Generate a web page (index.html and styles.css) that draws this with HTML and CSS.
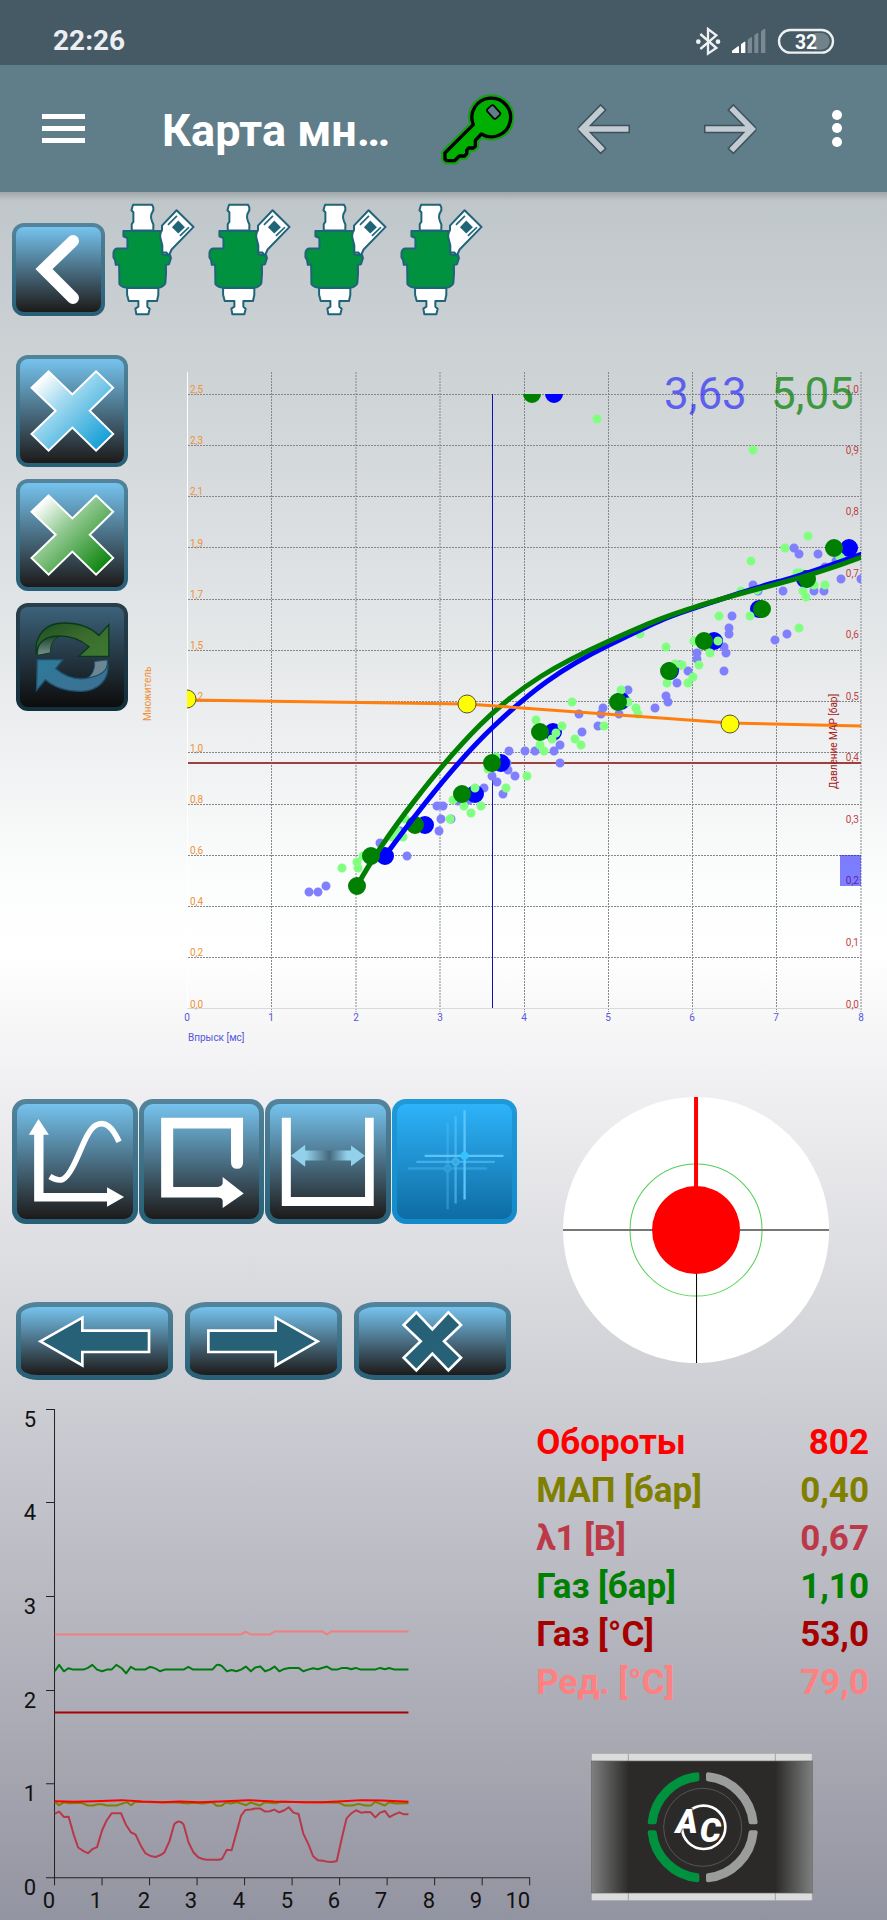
FILE: index.html
```html
<!DOCTYPE html>
<html lang="ru">
<head>
<meta charset="utf-8">
<meta name="viewport" content="width=device-width, initial-scale=1">
<title>Карта множителя</title>
<link rel="stylesheet" href="styles.css">
</head>
<body>
<div class="status-bar">
  <span class="clock">22:26</span>
  <svg class="status-icons" viewBox="760 75 420 90" aria-hidden="true">
    <path class="bt" d="M773 99 L821 141 L796 158 V84 L821 103 L773 144"/>
    <circle cx="767" cy="122" r="7" fill="#eef1f2"/><circle cx="826" cy="122" r="7" fill="#eef1f2"/>
    <path d="M868 156 V149 L886 136 H889 V156Z M895 156 V130 L905 122 H908 V156Z" fill="#fff"/>
    <path d="M915 156 V116 L925 109 H928 V156Z M935 156 V103 L944 96 H947 V156Z M955 156 V91 L964 84 H968 V156Z" fill="#7b8a92"/>
    <path d="M1115 96 H1136 A25 25 0 0 1 1136 146 H1115Z" fill="#71828a"/>
    <rect x="1009" y="87" width="162" height="68" rx="34" fill="none" stroke="#eef1f2" stroke-width="7"/>
    <text class="battery" x="1090" y="143">32</text>
  </svg>
</div>

<header class="app-bar">
  <button class="bar-btn" aria-label="Меню">
    <svg width="43" height="30" viewBox="0 0 43 30"><path d="M0 0H43V5H0Z M0 12H43V17H0Z M0 24H43V29H0Z" fill="#fff"/></svg>
  </button>
  <h1 class="title">Карта мн…</h1>
  <button class="bar-btn" aria-label="Ключ">
    <svg width="74" height="74" viewBox="0 275 222 222">
      <path class="key-glow" d="M100 373 A58 58 0 1 1 124 401 L106 420 V438 L100 443 H86 L80 450 V460 L74 467 H58 L44 481 H20 L15 476 V458Z"/>
      <path class="key-body" d="M100 373 A58 58 0 1 1 124 401 L106 420 V438 L100 443 H86 L80 450 V460 L74 467 H58 L44 481 H20 L15 476 V458Z"/>
      <rect x="148" y="316" width="26" height="38" rx="6" transform="rotate(-42 161 335)" fill="#607d8b" stroke="#000" stroke-width="5"/>
    </svg>
  </button>
  <button class="bar-btn" aria-label="Назад">
    <svg width="54" height="52" viewBox="409 308 162 156">
      <path class="arrow-edge" d="M483 329 L427 386 L483 444 M440 386 H558"/>
      <path class="arrow-fill" d="M483 329 L427 386 L483 444 M440 386 H558"/>
    </svg>
  </button>
  <button class="bar-btn bar-btn-next" aria-label="Вперёд">
    <svg width="54" height="52" viewBox="787 308 162 156">
      <path class="arrow-edge" d="M875 329 L931 386 L875 444 M918 386 H800"/>
      <path class="arrow-fill" d="M875 329 L931 386 L875 444 M918 386 H800"/>
    </svg>
  </button>
  <button class="bar-btn bar-btn-more" aria-label="Ещё">
    <svg width="10" height="37" viewBox="0 0 10 37" fill="#fff"><circle cx="5" cy="5" r="5"/><circle cx="5" cy="18" r="5"/><circle cx="5" cy="32" r="5"/></svg>
  </button>
</header>

<main class="content">
  <svg class="defs" aria-hidden="true">
    <symbol id="injector" viewBox="338 608 250 340">
      <g stroke="#1f6478" stroke-width="6" stroke-linejoin="round">
        <path fill="#fff" d="M400 613 H457 L461 622 V630 L455 642 Q452 656 461 672 V691 H396 V672 L401 664 V636 L395 630Z"/>
        <path fill="#00923f" d="M371 692 H488 V762 L512 766 L514 774 L508 792 L499 794 V822 L497 850 Q490 861 475 863 H382 Q366 861 359 852 L358 794 H348 L346 780 L341 771 V758 Q343 746 352 745 H383 V714 L371 708Z"/>
        <path fill="#fff" d="M531 630 L582 680 L516 748 L508 766 L500 757 L488 757 V735 L482 712 Q480 700 487 690 V676Z"/>
        <path fill="#fff" d="M382 864 H476 V884 L472 903 H443 V920 L450 926 L446 943 H410 L407 926 L416 920 V903 H387 L382 884Z"/>
      </g>
      <path d="M536 661 L556 681 L536 700 L517 681Z" fill="#1f6478"/>
      <path d="M505 674 L532 647 M541 707 L568 681" stroke="#1f6478" stroke-width="5"/>
    </symbol>
  </svg>

  <section class="top-row">
    <button class="tile back" aria-label="Вернуться">
      <svg viewBox="4 4 85 85"><path d="M61 18 L32 46 L61 75" fill="none" stroke="#fff" stroke-width="12" stroke-linecap="round"/></svg>
    </button>
    <div class="injectors" role="img" aria-label="Форсунки">
      <svg><use href="#injector"/></svg>
      <svg><use href="#injector"/></svg>
      <svg><use href="#injector"/></svg>
      <svg><use href="#injector"/></svg>
    </div>
  </section>

  <section class="map">
    <div class="tools">
      <button class="tile tool" aria-label="Удалить бензин">
        <svg viewBox="62 57 310 311">
          <linearGradient id="xb" x1="0" y1="0" x2="1" y2="1"><stop offset=".1" stop-color="#fff"/><stop offset=".35" stop-color="#a9dcf1"/><stop offset=".9" stop-color="#159fd6"/></linearGradient>
          <path d="M147 94 L218 163 L289 94 L340 143 L270 212 L340 281 L289 331 L218 262 L147 331 L96 281 L168 212 L96 143Z" fill="url(#xb)" stroke="#fff" stroke-width="6"/>
        </svg>
      </button>
      <button class="tile tool" aria-label="Удалить газ">
        <svg viewBox="62 57 310 311">
          <linearGradient id="xg" x1="0" y1="0" x2="1" y2="1"><stop offset=".1" stop-color="#fff"/><stop offset=".4" stop-color="#94ca94"/><stop offset=".9" stop-color="#0e850e"/></linearGradient>
          <path d="M147 94 L218 163 L289 94 L340 143 L270 212 L340 281 L289 331 L218 262 L147 331 L96 281 L168 212 L96 143Z" fill="url(#xg)" stroke="#fff" stroke-width="6"/>
        </svg>
      </button>
      <button class="tile tool tool-off" aria-label="Обновить" disabled>
        <svg viewBox="62 808 315 290">
          <linearGradient id="rg" x1="0" y1="0" x2="1" y2="1"><stop offset="0" stop-color="#1c4c22"/><stop offset=".5" stop-color="#3b6b2c"/><stop offset="1" stop-color="#3f7a33"/></linearGradient>
          <linearGradient id="rt" x1="0" y1="0" x2="0" y2="1"><stop offset="0" stop-color="#12401f"/><stop offset="1" stop-color="#7b9290"/></linearGradient>
          <linearGradient id="rb" x1="0" y1="0" x2="1" y2="1"><stop offset="0" stop-color="#2d7a9a"/><stop offset="1" stop-color="#3f6f92"/></linearGradient>
          <path d="M116 948 C112 905 135 880 190 887 C165 895 152 915 155 940Z" fill="url(#rt)" stroke="#0c3a1c" stroke-width="3"/>
          <path d="M110 945 C106 885 140 850 195 850 C240 850 275 862 301 888 L331 855 V951 H240 L271 922 C240 895 205 886 165 890 C130 895 115 915 110 945Z" fill="url(#rg)" stroke="#063a1b" stroke-width="4"/>
          <path d="M288 967 L326 962 C330 1000 310 1018 265 1017 C280 1010 290 990 288 967Z" fill="#6d8694" stroke="#2b566e" stroke-width="3"/>
          <path d="M114 961 H192 L170 988 C205 1018 245 1024 280 1014 C310 1007 326 990 328 972 C334 1020 300 1057 245 1057 C200 1057 165 1045 139 1022 L112 1054Z" fill="url(#rb)" stroke="#1d506a" stroke-width="4"/>
        </svg>
      </button>
    </div>

    <svg class="map-chart" viewBox="136 352 751 700" role="img" aria-label="Карта множителя">
      <defs><clipPath id="plot"><rect x="187" y="394" width="674" height="615"/></clipPath></defs>
      <g class="grid">
        <path d="M188 394.5H861 M188 445.5H861 M188 496.5H861 M188 547.5H861 M188 599.5H861 M188 650.5H861 M188 701.5H861 M188 752.5H861 M188 804.5H861 M188 855.5H861 M188 906.5H861 M188 957.5H861"/>
        <path d="M271.5 372V1012 M356 372V1012 M440 372V1012 M524.5 372V1012 M608.5 372V1012 M692.5 372V1012 M776.5 372V1012 M861 372V1012"/>
      </g>
      <path d="M187.5 372V1008" stroke="#fff"/>
      <path d="M187.5 1008.5H861" stroke="#d9d9dc"/>
      <g class="lbl lbl-mul">
        <text x="190" y="393">2,5</text><text x="190" y="444">2,3</text><text x="190" y="495">2,1</text><text x="190" y="547">1,9</text><text x="190" y="598">1,7</text><text x="190" y="649">1,5</text><text x="190" y="700">1,2</text><text x="190" y="752">1,0</text><text x="190" y="803">0,8</text><text x="190" y="854">0,6</text><text x="190" y="905">0,4</text><text x="190" y="956">0,2</text><text x="190" y="1008">0,0</text>
        <text transform="translate(151 721) rotate(-90)">Множитель</text>
      </g>
      <g class="lbl lbl-inj">
        <text x="187" y="1021">0</text><text x="271" y="1021">1</text><text x="356" y="1021">2</text><text x="440" y="1021">3</text><text x="524" y="1021">4</text><text x="608" y="1021">5</text><text x="692" y="1021">6</text><text x="776" y="1021">7</text><text x="861" y="1021">8</text>
        <text class="axis-name" x="188" y="1041">Впрыск [мс]</text>
      </g>
      <path d="M188 763H861" stroke="#9c4040" stroke-width="2"/>
      <path d="M492.5 394V1008" stroke="#1010b8"/>
      <g class="lbl lbl-map">
        <text x="859" y="393">1,0</text><text x="859" y="454">0,9</text><text x="859" y="515">0,8</text><text x="859" y="577">0,7</text><text x="859" y="638">0,6</text><text x="859" y="700">0,5</text><text x="859" y="761">0,4</text><text x="859" y="823">0,3</text><text x="859" y="884">0,2</text><text x="859" y="946">0,1</text><text x="859" y="1008">0,0</text>
      </g>
      <rect x="840" y="855" width="21" height="31" fill="#00f" fill-opacity=".5"/>
      <g clip-path="url(#plot)">
        <path id="dots-petrol" class="dots petrol-dots" d=""/>
        <path id="knots-petrol" class="dots petrol-knots" d=""/>
        <path id="dots-gas" class="dots gas-dots" d=""/>
        <path id="knots-gas" class="dots gas-knots" d=""/>
        <path class="curve" stroke="#00f" d="M385 856 C415 815 455 763 493 727 S560 669 609 645 S665 618 692 609 S750 589 777 582 S830 565 862 554"/>
        <path class="curve" stroke="#008000" d="M357 886 C385 835 440 765 480 725 S560 663 609 641 S665 617 692 608 S750 591 777 584 S830 569 862 557"/>
        <path d="M187 700 L467 704 L730 723 L862 726" fill="none" stroke="#ff7f0e" stroke-width="3"/>
        <g fill="#ff0" stroke="#55552a"><circle cx="187" cy="699" r="9"/><circle cx="467" cy="704" r="9"/><circle cx="730" cy="724" r="9"/></g>
      </g>
      <text class="lbl lbl-side" transform="translate(837 789) rotate(-90)">Давление МАР [бар]</text>
      <text class="reading" x="664" y="409" fill="#0000ff">3,63</text>
      <text class="reading reading-gas" x="771" y="409" fill="#008000">5,05</text>
    </svg>
  </section>

  <section class="lower">
    <div class="controls">
      <div class="modes">
        <button class="tile mode" aria-label="График">
          <svg viewBox="51 73 337 344"><path fill="#fff" d="M82 165 L111 118 L142 165 H126 V339 H316 V322 L367 351 L316 380 V365 H98 V165Z"/><path fill="none" stroke="#fff" stroke-width="17" d="M145 290 C178 310 192 302 214 260 C240 210 256 150 284 136 C311 123 332 142 352 186"/></svg>
        </button>
        <button class="tile mode" aria-label="Обход">
          <svg viewBox="426 73 337 344"><path fill="#fff" d="M473 114 H718 V247 Q718 267 700 267 Q682 267 682 247 V146 H509 V321 H642 Q655 320 657 310 V291 L720 341 L657 384 V362 Q655 353 642 353 H473Z"/></svg>
        </button>
        <button class="tile mode" aria-label="Диапазон">
          <svg viewBox="800 73 337 344">
            <linearGradient id="rng"><stop offset=".2" stop-color="#93d1eb"/><stop offset=".52" stop-color="#45687c"/><stop offset=".76" stop-color="#93d1eb"/></linearGradient>
            <path fill="#fff" d="M831 114 H858 V351 H1080 V114 H1106 V378 H831Z"/><path fill="url(#rng)" d="M858 228 L901 195 V212 H1038 V197 L1080 228 L1038 259 V242 H901 V261Z"/></svg>
        </button>
        <button class="tile mode mode-on" aria-label="Курсор" aria-pressed="true">
          <svg viewBox="1173 73 341 346" stroke="#5cc4fb" stroke-width="7" fill="#35c3ff">
            <g opacity=".35"><path d="M1322 130V390 M1202 267H1440"/><circle cx="1322" cy="267" r="9"/></g>
            <g opacity=".6"><path d="M1346 110V372 M1228 247H1464"/><circle cx="1346" cy="247" r="9"/></g>
            <path d="M1373 92V360 M1253 229H1490"/><circle cx="1373" cy="229" r="12" stroke="none"/>
          </svg>
        </button>
      </div>
      <div class="moves">
        <button class="tile move" aria-label="Влево"><svg viewBox="65 681 431 204"><path class="move-icon" d="M118 784 L244 713 V752 H444 V816 H244 V856Z"/></svg></button>
        <button class="tile move" aria-label="Вправо"><svg viewBox="563 681 435 204"><path class="move-icon" d="M943 784 L817 713 V752 H615 V816 H817 V856Z"/></svg></button>
        <button class="tile move" aria-label="Сброс"><svg viewBox="1063 681 435 204"><path class="move-icon" d="M1232 697 L1280 748 L1328 697 L1366 735 L1315 784 L1366 833 L1328 871 L1280 821 L1232 871 L1194 833 L1245 784 L1194 735Z"/></svg></button>
      </div>
    </div>

    <svg class="target" viewBox="0 0 266 266" role="img" aria-label="Отклонение">
      <circle cx="133" cy="133" r="133" fill="#fff"/>
      <circle cx="133" cy="133" r="66" fill="none" stroke="#4fd04f"/>
      <path d="M0 133H266" stroke="#777" stroke-width="2"/>
      <path d="M133.5 133V266" stroke="#000"/>
      <path d="M133 0V133" stroke="#f00" stroke-width="4"/>
      <circle cx="133" cy="133" r="44" fill="#f00"/>
    </svg>

    <svg class="trend" viewBox="0 1400 532 520" role="img" aria-label="Осциллограф">
      <path stroke="#222" fill="none" d="M54.5 1409V1885 M46 1877.5H530 M46 1409.5H54 M46 1502.5H54 M46 1596.5H54 M46 1690.5H54 M46 1783.5H54 M102 1877V1885 M149.5 1877V1885 M197 1877V1885 M244.5 1877V1885 M292 1877V1885 M339.5 1877V1885 M387 1877V1885 M434.5 1877V1885 M482 1877V1885 M529.5 1877V1885"/>
      <g class="trend-lbl">
        <text x="36" y="1427">5</text><text x="36" y="1520">4</text><text x="36" y="1614">3</text><text x="36" y="1708">2</text><text x="36" y="1801">1</text><text x="36" y="1895">0</text>
        <text x="55" y="1908">0</text><text x="102" y="1908">1</text><text x="150" y="1908">2</text><text x="197" y="1908">3</text><text x="245" y="1908">4</text><text x="293" y="1908">5</text><text x="340" y="1908">6</text><text x="387" y="1908">7</text><text x="435" y="1908">8</text><text x="482" y="1908">9</text><text x="530" y="1908">10</text>
      </g>
      <g class="trace" transform="translate(0 1390) scale(.338)">
        <path stroke="#f08080" d="M162 723H712L727 715L741 723H799L813 714H954L967 723L980 714H1208"/>
        <path stroke="#007a10" d="M162 832L175 813L189 832L202 823L217 827H247L260 822L273 813L287 827L302 832L316 827H330L344 813L360 823L373 838L387 819L401 827H429L443 819Q455 819 473 832L487 827H543L557 819L571 827H628L641 813Q650 811 658 818L671 832L685 828L699 832L713 827L727 818L742 832L755 821L770 818L784 832L798 827L812 818L826 832L841 825L855 822H883L897 832L911 827L926 823L940 826L967 818L982 827H997L1012 822H1026L1039 826L1052 822L1067 827H1109L1124 822L1138 826L1151 822L1167 827H1208"/>
        <path stroke="#a60000" d="M162 954H1208"/>
        <path stroke="#808000" d="M162 1218L175 1228L190 1219L205 1222L240 1221L260 1229H275L290 1225H302L315 1229H345L375 1219L388 1228L400 1218L490 1220L520 1219L555 1223L570 1221L600 1223L628 1219L641 1230H655L668 1220L682 1223L700 1219L728 1228L742 1220L768 1229L784 1219L815 1222L830 1218L960 1220L1003 1221L1020 1229H1042L1060 1224L1080 1229H1097L1110 1218L1138 1229L1151 1219L1170 1223L1208 1222"/>
        <path stroke="#f00" d="M162 1216L220 1218L280 1216L360 1213L420 1217L480 1219L530 1217L590 1219L650 1217L735 1213L810 1217L900 1219L950 1219L1000 1217L1070 1213L1130 1214L1208 1218"/>
        <path stroke="#b8384a" d="M162 1253L175 1247L189 1263L203 1262L218 1315L231 1353L247 1364L260 1370L273 1358L287 1352L302 1302L315 1274L330 1252H358L372 1285L387 1308L401 1315L416 1347L430 1370Q444 1380 460 1381Q475 1378 486 1368L501 1335L515 1285Q529 1267 543 1285L558 1339L572 1367L586 1382Q600 1389 612 1389H641Q652 1390 657 1386L671 1360L685 1361L699 1310L713 1259L726 1242L742 1241L755 1238H770L784 1247L798 1246L811 1241L826 1249L841 1243L854 1234L868 1250L883 1254L897 1312L912 1343L926 1379L940 1391L955 1392Q975 1399 996 1393L1011 1325L1025 1267L1039 1252L1053 1243L1068 1250L1082 1248L1096 1249L1110 1264L1124 1250L1138 1245L1152 1263L1167 1255L1181 1249L1195 1255H1208"/>
      </g>
    </svg>

    <div class="side">
      <table class="readouts">
        <tr class="rpm"><th scope="row">Обороты</th><td>802</td></tr>
        <tr class="map-p"><th scope="row">МАП [бар]</th><td>0,40</td></tr>
        <tr class="lambda"><th scope="row">λ1 [В]</th><td>0,67</td></tr>
        <tr class="gas-p"><th scope="row">Газ [бар]</th><td>1,10</td></tr>
        <tr class="gas-t"><th scope="row">Газ [°C]</th><td>53,0</td></tr>
        <tr class="red-t"><th scope="row">Ред. [°C]</th><td>79,0</td></tr>
      </table>
      <button class="module" aria-label="Переключатель газ/бензин">
        <svg viewBox="62 68 666 444">
          <linearGradient id="body"><stop offset="0" stop-color="#7f8080"/><stop offset=".17" stop-color="#2b2a29"/><stop offset=".83" stop-color="#2b2a29"/><stop offset="1" stop-color="#7f8080"/></linearGradient>
          <rect x="63" y="69" width="663" height="442" rx="4" fill="#d9dcda" stroke="#9a9c9e" stroke-width="2"/>
          <path d="M174 69V511 M615 69V511" stroke="#a0a2a2" stroke-width="3"/>
          <rect x="63" y="92" width="665" height="396" fill="url(#body)" stroke="#666" stroke-width="2"/>
          <g stroke-width="12" stroke-linejoin="round">
            <path fill="#00923f" stroke="#00923f" d="M238 276 A160 160 0 0 1 381 132 V147 A146 146 0 0 0 253 276Z M238 306 A160 160 0 0 0 381 450 V435 A146 146 0 0 1 253 306Z"/>
            <path fill="#9b9d9d" stroke="#9b9d9d" d="M556 276 A160 160 0 0 0 413 132 V147 A146 146 0 0 1 541 276Z M556 306 A160 160 0 0 1 413 450 V435 A146 146 0 0 0 541 306Z"/>
          </g>
          <circle cx="397" cy="291" r="117" fill="none" stroke="#6a6a6a" stroke-width="2"/>
          <circle cx="400" cy="291" r="65" fill="none" stroke="#fff" stroke-width="8"/>
          <text class="logo" x="316" y="309">A</text><text class="logo" x="388" y="336">C</text>
        </svg>
      </button>
    </div>
  </section>
</main>
<script src="chart.js"></script>
</body>
</html>
```
FILE: styles.css
```css
* { box-sizing: border-box; }

body {
  margin: 0;
  font-family: Roboto, "Noto Sans", sans-serif;
  background: #9394a1;
}

button {
  margin: 0;
  padding: 0;
  border: 0;
  background: none;
  font: inherit;
}

svg { display: block; }

.defs {
  position: absolute;
  width: 0;
  height: 0;
}

.status-bar {
  display: flex;
  align-items: center;
  justify-content: space-between;
  height: 65px;
  padding: 16px 51px 0 53px;
  background: #465a65;
}

.clock {
  font-size: 28px;
  font-weight: 700;
  line-height: 32px;
  color: #eceff1;
}

.status-icons {
  width: 140px;
  height: 30px;
}

.bt {
  fill: none;
  stroke: #eef1f2;
  stroke-width: 7;
}

.battery {
  font-size: 58px;
  font-weight: 700;
  text-anchor: middle;
  fill: #fff;
}

.app-bar {
  display: flex;
  height: 127px;
  padding-right: 8px;
  background: #607d8a;
}

.bar-btn {
  display: flex;
  align-items: center;
  justify-content: center;
  flex: none;
  width: 126px;
}

.bar-btn-next { width: 129px; }

.bar-btn-more { width: 84px; }

.title {
  flex: 1;
  margin: 0;
  padding-left: 36px;
  font-size: 45px;
  font-weight: 700;
  line-height: 132px;
  white-space: nowrap;
  color: #fff;
}

.key-glow {
  fill: none;
  stroke: #12a212;
  stroke-width: 23;
  stroke-linejoin: round;
}

.key-body {
  fill: #00b000;
  stroke: #000;
  stroke-width: 10;
  stroke-linejoin: round;
}

.arrow-edge, .arrow-fill {
  fill: none;
  stroke-linecap: square;
}
.arrow-edge { stroke: #3d515c; stroke-width: 26; stroke-linejoin: round; }
.arrow-fill { stroke: #c1cbd1; stroke-width: 17; }

.content {
  padding-top: 11px;
  background:
    linear-gradient(rgba(0, 0, 0, .16), transparent) top / 100% 9px no-repeat,
    linear-gradient(#bfc6c9 0%, #cdd2d5 10%, #dbdfe1 20%, #ebedee 30%, #fcfdfd 40%, #ffffff 44%, #f1f1f3 51%, #cfd0d5 69%, #c2c2cb 76%, #abacb5 88%, #9394a1 100%);
}

.tile {
  display: block;
  border: 4px solid transparent;
  border-radius: 12px;
  background:
    linear-gradient(#76c3ee, #1d1a19) padding-box,
    linear-gradient(#53849b, #265f76) border-box;
}

.tile svg {
  width: 100%;
  height: 100%;
}

.top-row {
  display: flex;
  align-items: flex-end;
  gap: 7px;
  padding-left: 12px;
}

.back {
  width: 93px;
  height: 93px;
}

.injectors {
  display: flex;
  gap: 12px;
}

.injectors svg {
  width: 84px;
  height: 113px;
}

.map {
  display: flex;
  align-items: flex-start;
  margin-top: 36px;
}

.tools {
  display: flex;
  flex-direction: column;
  gap: 12px;
  flex: none;
  width: 136px;
  padding: 3px 8px 0 16px;
}

.tool { height: 112px; }

.tool-off {
  height: 108px;
  background:
    linear-gradient(#3c627a, #0d0c0c) padding-box,
    linear-gradient(#293f4b, #12303c) border-box;
}

.map-chart {
  flex: 1;
  min-width: 0;
}

.grid path {
  fill: none;
  stroke: #85888b;
  stroke-dasharray: 2 1;
}

.lbl { font-size: 10px; }
.lbl-mul { fill: #f0913c; }
.lbl-inj { fill: #5555dd; text-anchor: middle; }
.axis-name { text-anchor: start; }
.lbl-map { fill: #c04444; text-anchor: end; }
.lbl-side { fill: #a82020; }

.dots {
  fill: none;
  stroke-linecap: round;
}
.petrol-dots { stroke: #8080ff; stroke-width: 9; }
.gas-dots { stroke: #80ff80; stroke-width: 9; }
.petrol-knots { stroke: #0000ff; stroke-width: 18; }
.gas-knots { stroke: #008000; stroke-width: 18; }

.curve {
  fill: none;
  stroke-width: 5;
}

.reading {
  font-size: 44px;
  opacity: .55;
}
.reading-gas { opacity: .7; }

.lower {
  display: grid;
  grid-template-columns: 3fr 2fr;
  row-gap: 20px;
  margin-top: 45px;
}

.controls { padding-top: 2px; }

.modes {
  display: flex;
  gap: 1px;
  padding: 0 15px 0 12px;
}

.mode {
  flex: 1;
  height: 125px;
  border-width: 5px;
  border-radius: 14px;
}

.mode-on {
  background:
    linear-gradient(#2eb3fa, #0e6ca2) padding-box,
    linear-gradient(#1e99da, #138bcb) border-box;
}

.moves {
  display: flex;
  gap: 12px;
  margin-top: 78px;
  padding: 0 21px 0 16px;
}

.move {
  flex: 1;
  height: 78px;
  border-width: 5px;
  border-radius: 22px / 13px;
}

.move-icon {
  fill: #266177;
  stroke: #fff;
  stroke-width: 8;
}

.target {
  width: 75%;
  margin-left: 31px;
}

.trend { width: 100%; }

.trend-lbl {
  font-size: 22px;
  text-anchor: end;
  fill: #111;
}

.trace path {
  fill: none;
  stroke-width: 2;
  stroke-linejoin: round;
  vector-effect: non-scaling-stroke;
}

.side { padding: 19px 18px 0 4px; }

.readouts {
  width: 100%;
  border-collapse: collapse;
  font-size: 35px;
  line-height: 48px;
}

.readouts th, .readouts td {
  padding: 0;
  font-weight: 700;
  text-align: left;
}
.readouts td { text-align: right; }

.rpm { color: #ff0000; }
.map-p { color: #808000; }
.lambda { color: #bc3a48; }
.gas-p { color: #008000; }
.gas-t { color: #a60000; }
.red-t { color: #ff8080; }

.module {
  display: block;
  width: 222px;
  margin: 46px 0 0 55px;
}

.logo {
  font-size: 100px;
  font-weight: 900;
  font-style: italic;
  fill: #fff;
  stroke: #2b2a29;
  stroke-width: 4;
  paint-order: stroke;
}
```
FILE: chart.js
```js
// Each series is drawn as one path of zero-length round-capped strokes.
const series = {
  "dots-petrol": [[794,548],[799,554],[818,554],[825,567],[836,561],[753,585],[758,591],[841,579],[861,579],[783,591],[814,591],[824,591],[732,616],[729,628],[729,634],[787,634],[775,640],[724,647],[726,653],[697,653],[697,659],[724,671],[688,671],[680,665],[677,683],[628,690],[666,696],[668,702],[655,708],[603,708],[579,714],[601,714],[619,714],[598,726],[582,732],[560,745],[554,751],[535,751],[560,763],[509,751],[525,751],[507,763],[508,770],[515,776],[492,776],[497,782],[503,794],[484,788],[469,800],[458,801],[437,806],[443,806],[441,819],[451,819],[439,831],[400,831],[380,843],[407,856],[309,892],[318,892],[326,886]],
  "knots-petrol": [[554,394],[849,548],[805,579],[759,609],[714,641],[670,671],[621,701],[553,732],[501,763],[475,794],[425,825],[385,856]],
  "dots-gas": [[597,419],[753,450],[808,536],[785,548],[751,561],[741,591],[757,590],[797,573],[800,573],[840,557],[825,585],[814,585],[803,591],[806,597],[719,616],[750,616],[799,628],[640,634],[666,647],[694,641],[718,641],[710,653],[699,665],[682,665],[675,664],[693,677],[688,683],[667,683],[621,690],[572,702],[628,702],[636,708],[638,714],[536,720],[562,726],[604,726],[556,733],[552,739],[575,739],[581,745],[540,745],[544,751],[527,776],[506,788],[496,757],[488,769],[475,788],[453,800],[464,806],[481,806],[471,813],[450,819],[405,819],[397,831],[392,837],[403,837],[363,856],[357,862],[342,868],[358,868]],
  "knots-gas": [[532,394],[834,548],[807,579],[762,609],[704,641],[669,671],[618,702],[540,732],[492,763],[462,794],[415,825],[371,856],[357,886]]
};

for (const [id, points] of Object.entries(series)) {
  const d = points.map(([x, y]) => `M${x} ${y}h0`).join("");
  document.getElementById(id).setAttribute("d", d);
}
```
